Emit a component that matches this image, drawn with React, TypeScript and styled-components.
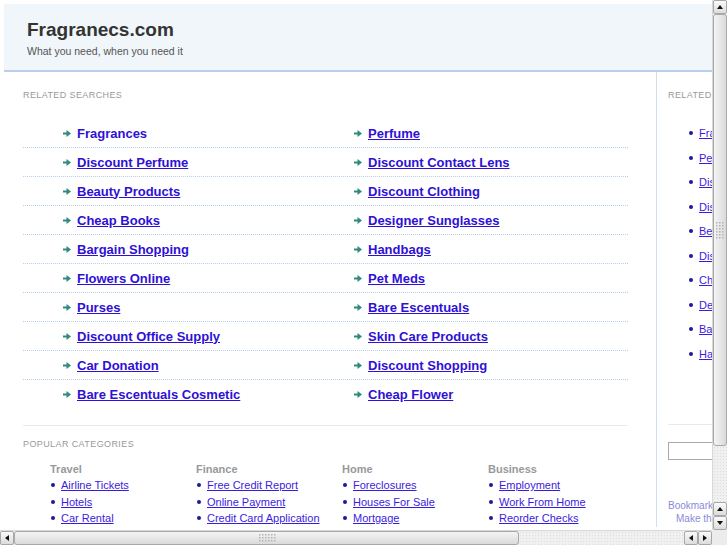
import styled, { createGlobalStyle } from "styled-components";

const GlobalStyle = createGlobalStyle`
  html, body {
    margin: 0;
    padding: 0;
    overflow: hidden;
    background: #fff;
    font-family: "Liberation Sans", Arial, sans-serif;
  }
`;

const related: [string, string][] = [
  ["Fragrances", "Perfume"],
  ["Discount Perfume", "Discount Contact Lens"],
  ["Beauty Products", "Discount Clothing"],
  ["Cheap Books", "Designer Sunglasses"],
  ["Bargain Shopping", "Handbags"],
  ["Flowers Online", "Pet Meds"],
  ["Purses", "Bare Escentuals"],
  ["Discount Office Supply", "Skin Care Products"],
  ["Car Donation", "Discount Shopping"],
  ["Bare Escentuals Cosmetic", "Cheap Flower"],
];

const categories = [
  { title: "Travel", links: ["Airline Tickets", "Hotels", "Car Rental"] },
  { title: "Finance", links: ["Free Credit Report", "Online Payment", "Credit Card Application"] },
  { title: "Home", links: ["Foreclosures", "Houses For Sale", "Mortgage"] },
  { title: "Business", links: ["Employment", "Work From Home", "Reorder Checks"] },
];

const sideLinks = [
  "Fragrances",
  "Perfume",
  "Discount Perfume",
  "Discount Contact Lens",
  "Beauty Products",
  "Discount Clothing",
  "Cheap Books",
  "Designer Sunglasses",
  "Bargain Shopping",
  "Handbags",
];

const Arrow = () => (
  <svg width="8" height="7" viewBox="0 0 8 7">
    <rect x="0" y="2.5" width="4" height="2" fill="#2f8a80" />
    <path d="M3.5 0 L8 3.5 L3.5 7 Z" fill="#2f8a80" />
  </svg>
);

const Tri = ({ dir }: { dir: "up" | "down" | "left" | "right" }) => {
  const d = {
    up: "M1 6 L4 2 L7 6 Z",
    down: "M1 2 L4 6 L7 2 Z",
    left: "M6 1 L2 4 L6 7 Z",
    right: "M2 1 L6 4 L2 7 Z",
  }[dir];
  return (
    <svg width="8" height="8" viewBox="0 0 8 8">
      <path d={d} fill="#111" />
    </svg>
  );
};

// the little dotted grip in the middle of a scrollbar thumb
const Grip = ({ vertical }: { vertical?: boolean }) => {
  const cols = vertical ? 3 : 6;
  return (
    <svg width={vertical ? 10 : 18} height={vertical ? 18 : 10}>
      {Array.from({ length: 18 }).map((_, i) => {
        const a = (i % cols) * 3 + 1;
        const b = Math.floor(i / cols) * 3 + 1;
        return <rect key={i} x={a} y={b} width="1.5" height="1.5" fill="#b4b4b4" />;
      })}
    </svg>
  );
};

export default function App() {
  return (
    <>
      <GlobalStyle />
      <Frame>
        <Viewport>
          <Page>
            <Header>
              <Title>Fragranecs.com</Title>
              <Tagline>What you need, when you need it</Tagline>
            </Header>
            <Body>
              <Main>
                <SectionLabel>Related Searches</SectionLabel>
                <SearchList>
                  {related.map((pair, i) => (
                    <SearchRow key={i} $last={i === related.length - 1}>
                      {pair.map((t, j) => (
                        <SearchCell key={j}>
                          <Arrow />
                          <BigLink href="#" $plain={i === 0 && j === 0}>
                            {t}
                          </BigLink>
                        </SearchCell>
                      ))}
                    </SearchRow>
                  ))}
                </SearchList>
                <Divider />
                <SectionLabel>Popular Categories</SectionLabel>
                <CatGrid>
                  {categories.map((c) => (
                    <CatCol key={c.title}>
                      <CatTitle>{c.title}</CatTitle>
                      {c.links.map((l) => (
                        <SmallItem key={l}>
                          <Dot />
                          <SmallLink href="#">{l}</SmallLink>
                        </SmallItem>
                      ))}
                    </CatCol>
                  ))}
                </CatGrid>
              </Main>
              <Side>
                <SectionLabel>Related Searches</SectionLabel>
                <SideList>
                  {sideLinks.map((l) => (
                    <SideItem key={l}>
                      <Dot />
                      <SmallLink href="#">{l}</SmallLink>
                    </SideItem>
                  ))}
                </SideList>
                <SideDivider />
                <SearchInput />
                <Bookmark>Bookmark this page</Bookmark>
                <Homepage>Make this your homepage</Homepage>
              </Side>
            </Body>
          </Page>
        </Viewport>
        <VBar>
          <SBtn>
            <Tri dir="up" />
          </SBtn>
          <VThumb>
            <Grip vertical />
          </VThumb>
          <Track />
          <SBtn>
            <Tri dir="up" />
          </SBtn>
          <SBtn>
            <Tri dir="down" />
          </SBtn>
        </VBar>
        <HBar>
          <SBtn>
            <Tri dir="left" />
          </SBtn>
          <HThumb>
            <Grip />
          </HThumb>
          <Track />
          <SBtn>
            <Tri dir="left" />
          </SBtn>
          <SBtn>
            <Tri dir="right" />
          </SBtn>
        </HBar>
        <Corner />
      </Frame>
    </>
  );
}

const Frame = styled.div`
  display: grid;
  grid-template-columns: 712px 15px;
  grid-template-rows: 530px 15px;
  width: 727px;
  height: 545px;
`;

const Viewport = styled.div`
  overflow: hidden;
`;

const Page = styled.div`
  width: 900px;
  padding: 4px 0 0 4px;
`;

const Header = styled.header`
  height: 68px;
  box-sizing: border-box;
  padding: 15px 0 0 23px;
  background-color: #f0f6f9;
  background-image: radial-gradient(#e8eff3 0.5px, transparent 0.7px);
  background-size: 6px 6px;
  border-bottom: 2px solid #b9d0ec;
  width: 708px;
`;

const Title = styled.div`
  font-size: 19px;
  font-weight: bold;
  color: #333;
  line-height: 22px;
`;

const Tagline = styled.div`
  font-size: 10.5px;
  color: #555;
  margin-top: 4px;
`;

const Body = styled.div`
  display: flex;
`;

const Main = styled.div`
  width: 652px;
  box-sizing: border-box;
  padding: 18px 28px 0 19px;
`;

const SectionLabel = styled.div`
  font-size: 9px;
  letter-spacing: 0.4px;
  text-transform: uppercase;
  color: #999;
  line-height: 11px;
`;

const SearchList = styled.div`
  margin-top: 18px;
`;

const SearchRow = styled.div<{ $last: boolean }>`
  display: grid;
  grid-template-columns: 291px 1fr;
  height: 29px;
  border-bottom: 1px dotted ${(p) => (p.$last ? "transparent" : "#b8d0ec")};
  box-sizing: border-box;
`;

const SearchCell = styled.div`
  display: flex;
  align-items: center;
  gap: 6px;
  padding-left: 40px;
`;

const BigLink = styled.a<{ $plain: boolean }>`
  font-size: 13px;
  font-weight: bold;
  color: #2e10d6;
  text-decoration: ${(p) => (p.$plain ? "none" : "underline")};
`;

const Divider = styled.div`
  border-top: 1px solid #e3ebf5;
  margin: 16px 0 13px;
`;

const CatGrid = styled.div`
  display: grid;
  grid-template-columns: repeat(4, 146px);
  padding-left: 27px;
  margin-top: 13px;
`;

const CatCol = styled.div`
  display: flex;
  flex-direction: column;
`;

const CatTitle = styled.div`
  font-size: 11px;
  font-weight: bold;
  color: #999;
  line-height: 13px;
  margin-bottom: 1px;
`;

const SmallItem = styled.div`
  display: flex;
  align-items: center;
  gap: 6px;
  height: 16.5px;
  padding-left: 1px;
`;

const Dot = styled.span`
  width: 4px;
  height: 4px;
  border-radius: 2px;
  background: #1a1a9a;
  flex: none;
`;

const SmallLink = styled.a`
  font-size: 11px;
  color: #3a1ce0;
  text-decoration: underline;
  white-space: nowrap;
`;

const Side = styled.div`
  width: 240px;
  border-left: 1px solid #d0def0;
  padding: 18px 0 0 11px;
  box-sizing: border-box;
`;

const SideList = styled.div`
  margin-top: 20px;
  padding-left: 21px;
`;

const SideItem = styled.div`
  display: flex;
  align-items: center;
  gap: 6px;
  height: 24.5px;
`;

const SideDivider = styled.div`
  border-top: 1px solid #e3ebf5;
  margin-top: 58px;
`;

const SearchInput = styled.input`
  display: block;
  margin-top: 17px;
  width: 150px;
  height: 18px;
  box-sizing: border-box;
  border: 1px solid #aaa;
`;

const Bookmark = styled.div`
  font-size: 10px;
  color: #8a8ad8;
  margin-top: 40px;
`;

const Homepage = styled.div`
  font-size: 10px;
  color: #8a8ad8;
  margin-top: 2px;
  padding-left: 8px;
`;

const VBar = styled.div`
  display: flex;
  flex-direction: column;
  background: #ececec;
  border-left: 1px solid #d8d8d8;
`;

const HBar = styled.div`
  display: flex;
  background: #ececec;
  border-top: 1px solid #d8d8d8;
`;

const SBtn = styled.div`
  width: 14px;
  height: 14px;
  flex: none;
  box-sizing: border-box;
  border: 1px solid #a8a8a8;
  border-radius: 2px;
  background: linear-gradient(#fafafa, #dcdcdc);
  display: flex;
  align-items: center;
  justify-content: center;
`;

const VThumb = styled.div`
  height: 432px;
  flex: none;
  box-sizing: border-box;
  border: 1px solid #a8a8a8;
  border-radius: 3px;
  background: linear-gradient(90deg, #f4f4f4, #dadada);
  display: flex;
  align-items: center;
  justify-content: center;
`;

const HThumb = styled.div`
  width: 505px;
  flex: none;
  box-sizing: border-box;
  border: 1px solid #a8a8a8;
  border-radius: 3px;
  background: linear-gradient(#f4f4f4, #dadada);
  display: flex;
  align-items: center;
  justify-content: center;
`;

const Track = styled.div`
  flex: 1;
  background-color: #f0f0f0;
  background-image: radial-gradient(#dcdcdc 0.5px, transparent 0.7px);
  background-size: 3px 3px;
`;

const Corner = styled.div`
  background: #ececec;
`;
